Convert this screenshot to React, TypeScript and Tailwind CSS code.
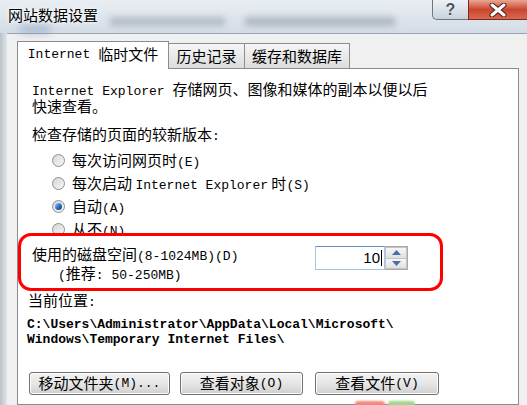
import React from 'react';

// ASCII runs use a narrow mono face, CJK runs use Noto at full size
function A({ children }: { children: React.ReactNode }) {
  return <span className="font-['Liberation_Mono',monospace] text-[13px]">{children}</span>;
}

function Radio({ checked, label }: { checked?: boolean; label: React.ReactNode }) {
  return (
    <div className="flex h-[23px] items-center pl-[34px]">
      <span className="flex h-[13px] w-[13px] items-center justify-center rounded-full border border-[#8f8f8f] bg-gradient-to-br from-[#d6d6d6] to-[#f6f6f6]">
        {checked && (
          <span className="h-[7px] w-[7px] rounded-full bg-gradient-to-br from-[#9fd0f6] via-[#2a74c9] to-[#0b3f8a]" />
        )}
      </span>
      <span className="ml-[7px] whitespace-nowrap">{label}</span>
    </div>
  );
}

function Button({ width, children }: { width: string; children: React.ReactNode }) {
  return (
    <div
      className={`${width} flex h-[23px] items-center justify-center rounded-[3px] border border-[#707070] bg-gradient-to-b from-[#f2f2f2] via-[#e6e6e6] to-[#cfcfcf] shadow-[inset_0_0_0_1px_#fcfcfc] whitespace-nowrap`}
    >
      {children}
    </div>
  );
}

export default function App() {
  return (
    <div className="relative flex h-[405px] w-[527px] flex-col overflow-hidden bg-[#dde5ed] font-['Noto_Sans_CJK_SC',sans-serif] text-[15px] text-black">
      {/* Title bar */}
      <div className="relative h-[33px] shrink-0 bg-gradient-to-b from-[#e9eef3] to-[#d3dce6]">
        <div className="absolute left-[110px] top-[17px] h-[9px] w-[115px] bg-[#7d8690] opacity-40 blur-[3px]" />
        <div className="absolute left-[245px] top-[17px] h-[9px] w-[150px] bg-[#6f7882] opacity-40 blur-[3px]" />
        <div className="absolute left-[20px] top-[24px] h-[10px] w-[30px] bg-[#6f8fb8] opacity-40 blur-[4px]" />
        <div className="relative pl-[8px] pt-[5px] text-[15px] leading-[20px] [text-shadow:0_0_6px_#ffffff,0_0_3px_#ffffff]">
          网站数据设置
        </div>
        {/* caption buttons */}
        <div className="absolute right-0 top-[-1px] flex h-[21px]">
          <div className="flex w-[36px] items-center justify-center rounded-bl-[5px] border border-r-0 border-[#6e7680] bg-gradient-to-b from-[#eef2f6] to-[#c8d2dc] font-['Liberation_Sans',sans-serif] text-[16px] font-bold leading-none text-[#4a535d] [text-shadow:0_0_2px_#ffffff]">
            ?
          </div>
          <div className="flex w-[59px] items-center justify-center border border-r-0 border-[#7a2a1e] bg-gradient-to-b from-[#e9a593] via-[#c9452e] to-[#d9684f]">
            <svg width="18" height="14" viewBox="0 0 18 14">
              <path d="M3 2 L15 12 M15 2 L3 12" stroke="#4a2018" strokeWidth="5" strokeLinecap="round" />
              <path d="M3 2 L15 12 M15 2 L3 12" stroke="#ffffff" strokeWidth="3" strokeLinecap="round" />
            </svg>
          </div>
        </div>
      </div>

      <div className="flex flex-1">
        {/* left frame */}
        <div className="w-[7px] shrink-0 bg-gradient-to-r from-[#b9c1c9] to-[#dfe5eb]" />

        {/* client area */}
        <div className="flex flex-1 flex-col border-t border-[#9aa4ae] bg-[#f0f0f0] pl-[10px] pt-[7px]">
          {/* tabs */}
          <div className="relative z-10 flex h-[28px] items-start">
            <div className="flex h-[28px] w-[152px] items-center justify-center border border-b-0 border-[#898c95] bg-white pb-[2px] whitespace-nowrap">
              <A>Internet</A>
              <span className="ml-[8px]">临时文件</span>
            </div>
            <div className="mt-[2px] flex h-[25px] w-[76px] items-center justify-center border border-b-0 border-l-0 border-[#898c95] bg-gradient-to-b from-[#f6f6f6] to-[#dcdcdc]">
              历史记录
            </div>
            <div className="mt-[2px] flex h-[25px] w-[105px] items-center justify-center border border-b-0 border-l-0 border-[#898c95] bg-gradient-to-b from-[#f6f6f6] to-[#dcdcdc]">
              缓存和数据库
            </div>
          </div>

          {/* panel */}
          <div className="-mt-[1px] flex w-[502px] flex-1 flex-col border border-[#898c95] bg-white">
            <div className="mt-[13px] pl-[14px] leading-[14px] whitespace-nowrap">
              <A>Internet Explorer </A>存储网页、图像和媒体的副本以便以后
              <br />
              快速查看。
            </div>

            <div className="mt-[11px] h-[20px] pl-[14px] leading-[20px]">
              检查存储的页面的较新版本<A>:</A>
            </div>

            <div className="mt-[5px] flex flex-col">
              <Radio label={<>每次访问网页时<A>(E)</A></>} />
              <Radio label={<>每次启动 <A>Internet Explorer</A> 时<A>(S)</A></>} />
              <Radio checked label={<>自动<A>(A)</A></>} />
              <Radio label={<>从不<A>(N)</A></>} />
            </div>

            {/* highlighted disk space box */}
            <div className="relative z-10 -mt-[8px] flex h-[58px] w-[425px] rounded-[13px] border-[3px] border-[#ff0000] bg-white">
              <div className="pl-[11px] pt-[10px] leading-[16px] whitespace-nowrap">
                <div>
                  使用的磁盘空间<A>(8-1024MB)(D)</A>
                </div>
                <div className="pl-[26px]">
                  <A>(</A>推荐<A>: 50-250MB)</A>
                </div>
              </div>
              <div className="ml-auto mr-[32px] mt-[10px] flex h-[24px]">
                <div className="flex h-[24px] w-[70px] items-center justify-end border border-[#a9c6e6] border-t-[#5c8fc5] bg-white pr-[2px] font-['Liberation_Sans',sans-serif] text-[15px]">
                  10
                  <span className="ml-[1px] h-[16px] w-[1px] bg-black" />
                </div>
                <div className="flex w-[23px] flex-col border border-l-0 border-[#a9a9a9] bg-[#ececec]">
                  <div className="flex flex-1 items-center justify-center border border-[#c4c4c4] bg-gradient-to-b from-[#f6f6f6] to-[#e0e0e0]">
                    <svg width="9" height="5" viewBox="0 0 9 5">
                      <path d="M0 5 L4.5 0 L9 5 Z" fill="#4d6fa8" />
                    </svg>
                  </div>
                  <div className="flex flex-1 items-center justify-center border border-t-0 border-[#c4c4c4] bg-gradient-to-b from-[#f6f6f6] to-[#e0e0e0]">
                    <svg width="9" height="5" viewBox="0 0 9 5">
                      <path d="M0 0 L9 0 L4.5 5 Z" fill="#4d6fa8" />
                    </svg>
                  </div>
                </div>
              </div>
            </div>

            <div className="h-[18px] pl-[10px] leading-[18px]">
              当前位置<A>:</A>
            </div>

            <div className="mt-[8px] pl-[9px] font-['Liberation_Mono',monospace] text-[13px] leading-[15px] font-semibold whitespace-nowrap">
              C:\Users\Administrator\AppData\Local\Microsoft\
              <br />
              Windows\Temporary Internet Files\
            </div>

            <div className="mt-[25px] flex pl-[11px]">
              <Button width="w-[141px]">
                移动文件夹<A>(M)...</A>
              </Button>
              <div className="ml-[10px]">
                <Button width="w-[123px]">
                  查看对象<A>(O)</A>
                </Button>
              </div>
              <div className="ml-[12px]">
                <Button width="w-[124px]">
                  查看文件<A>(V)</A>
                </Button>
              </div>
            </div>
          </div>
        </div>
      </div>

      {/* bits of the next control peeking at the bottom edge */}
      <div className="absolute left-[355px] top-[401px] h-[6px] w-[30px] rounded-t-[3px] bg-[#f08a7a] blur-[1px]" />
      <div className="absolute left-[388px] top-[401px] h-[6px] w-[27px] rounded-t-[3px] bg-[#9ed88a] blur-[1px]" />
    </div>
  );
}
